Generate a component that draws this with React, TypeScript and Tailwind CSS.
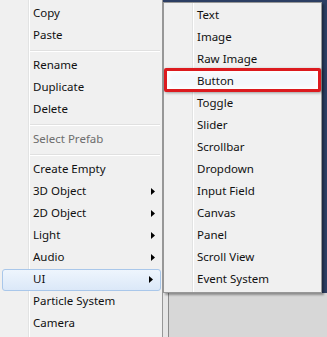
import React from "react";

type Entry = { label?: string; sep?: boolean; disabled?: boolean; sub?: boolean; active?: boolean };

const mainItems: Entry[] = [
  { label: "Copy" },
  { label: "Paste" },
  { sep: true },
  { label: "Rename" },
  { label: "Duplicate" },
  { label: "Delete" },
  { sep: true },
  { label: "Select Prefab", disabled: true },
  { sep: true },
  { label: "Create Empty" },
  { label: "3D Object", sub: true },
  { label: "2D Object", sub: true },
  { label: "Light", sub: true },
  { label: "Audio", sub: true },
  { label: "UI", sub: true, active: true },
  { label: "Particle System" },
  { label: "Camera" },
];

const uiItems = [
  "Text",
  "Image",
  "Raw Image",
  "Button",
  "Toggle",
  "Slider",
  "Scrollbar",
  "Dropdown",
  "Input Field",
  "Canvas",
  "Panel",
  "Scroll View",
  "Event System",
];

// icon gutter: grey line + white line at 28px
const gutter =
  "bg-[linear-gradient(to_right,#f0f0f0_28px,#e2e3e3_28px,#e2e3e3_29px,#ffffff_29px,#ffffff_30px,#f0f0f0_30px)]";

const Arrow = () => (
  <svg width="4" height="7" viewBox="0 0 4 7" className="ml-auto mr-[7px] mt-[1px] shrink-0">
    <path d="M0 0 L4 3.5 L0 7 Z" fill="#000" />
  </svg>
);

export default function App() {
  return (
    <div
      className="relative flex w-[327px] h-[337px] overflow-hidden bg-[#f0f0f0] text-[11.5px] text-[#111]"
      style={{ fontFamily: '"Segoe UI", "Noto Sans", "Open Sans", sans-serif' }}
    >
      {/* main context menu (top is cut off) */}
      <div className={`w-[163px] shrink-0 pt-[3px] border-r border-[#979797] ${gutter}`}>
        {mainItems.map((it, i) =>
          it.sep ? (
            <div key={i} className="h-[8px] ml-[30px] mr-[2px] flex flex-col justify-center">
              <div className="h-[1px] bg-[#e0e0e0]" />
              <div className="h-[1px] bg-white" />
            </div>
          ) : it.active ? (
            <div
              key={i}
              className="h-[22px] ml-[2px] mr-[1px] pb-[2px] flex items-center rounded-[3px] border border-[#a9c7ea] bg-gradient-to-b from-[#eef5fd] to-[#dbe8f8]"
            >
              <span className="pl-[30px] leading-none">{it.label}</span>
              {it.sub && <Arrow />}
            </div>
          ) : (
            <div key={i} className="h-[22px] pb-[2px] flex items-center">
              <span className={`pl-[33px] leading-none ${it.disabled ? "text-[#6d6d6d]" : ""}`}>
                {it.label}
              </span>
              {it.sub && <Arrow />}
            </div>
          )
        )}
      </div>

      {/* window behind, on the right */}
      <div className="flex-1 flex flex-col">
        <div className="h-[293px] bg-[#2c3e63]" />
        <div className="flex-1 flex">
          <div className="w-[5px] bg-[#e6e6e6]" />
          <div className="flex-1 border-l border-[#8a8a8a] bg-[#d7d7d7]" />
        </div>
      </div>

      {/* UI submenu, open over the window */}
      <div
        className={`absolute left-[163px] top-[2px] w-[159px] h-[291px] border border-[#979797] pt-[2px] shadow-[2px_2px_2px_rgba(0,0,0,0.35)] ${gutter}`}
      >
        {uiItems.map((label) => (
          <div key={label} className="relative h-[22px] pb-[2px] flex items-center">
            {label === "Button" && (
              <div className="absolute left-0 right-0 top-[-3px] bottom-[1px] rounded-[2px] border-[3px] border-[#dc1a1e] bg-[#f4f7fb] shadow-[inset_0_0_4px_2px_rgba(255,255,255,0.95),1px_1px_3px_rgba(0,0,0,0.35)]" />
            )}
            <span className="relative pl-[33px] leading-none">{label}</span>
          </div>
        ))}
      </div>
    </div>
  );
}
